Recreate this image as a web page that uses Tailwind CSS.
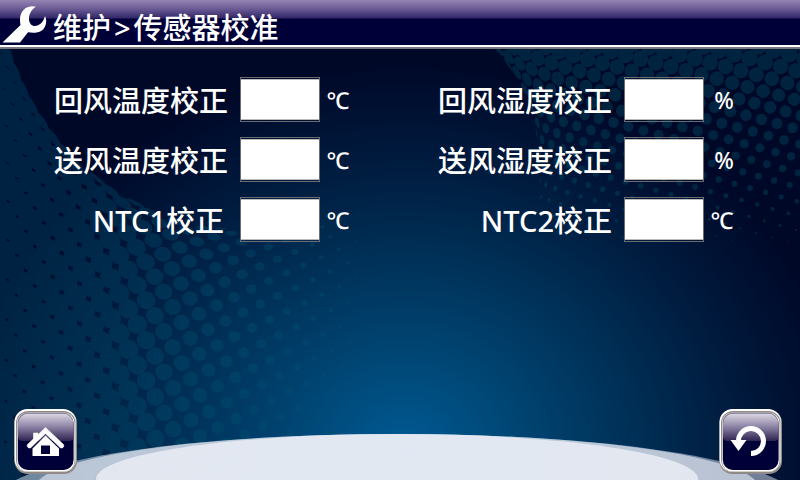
<!DOCTYPE html>
<html lang="zh-CN">
<head>
<meta charset="utf-8">
<meta name="viewport" content="width=device-width, initial-scale=1">
<title>维护&gt;传感器校准</title>
<script src="https://cdn.jsdelivr.net/npm/@tailwindcss/browser@4"></script>
</head>
<body class="relative isolate flex min-h-screen flex-col overflow-hidden bg-[#000828] font-['Noto_Sans','Noto_Sans_CJK_SC',sans-serif] font-medium text-white">

<!-- Backdrop: glow, halftone dots and the pale horizon -->
<svg class="absolute inset-0 -z-10 h-full w-full" viewBox="0 0 800 480" preserveAspectRatio="none" aria-hidden="true">
  <defs>
    <radialGradient id="glow" gradientUnits="userSpaceOnUse" cx="0" cy="0" r="1" gradientTransform="translate(405 450) scale(440 385)">
      <stop offset="0" stop-color="#005a94"/>
      <stop offset="0.25" stop-color="#004674"/>
      <stop offset="0.5" stop-color="#003158"/>
      <stop offset="0.75" stop-color="#001b3e"/>
      <stop offset="1" stop-color="#000828"/>
    </radialGradient>
  </defs>
  <rect width="800" height="480" fill="url(#glow)"/>
  <g id="dots-left" fill="#005272" opacity="0.36"></g>
  <g id="dots-right" fill="#005068" opacity="0.38"></g>
  <ellipse cx="397" cy="500" rx="400" ry="66" fill="#dfe6f5" fill-opacity="0.5"/>
  <ellipse cx="397" cy="488" rx="362" ry="54" fill="#e8ecf5" fill-opacity="0.62"/>
  <ellipse cx="397" cy="479" rx="301" ry="45" fill="#eceff6" fill-opacity="0.8"/>
</svg>

<header class="flex h-[49px] items-center gap-1.5 border-b-2 border-[#77777c] bg-[linear-gradient(to_bottom,#9484b4_0,#6a5a94_9px,#332768_18px,#000038_19px,#000038_45px,#fff_45px)]">
  <svg class="ml-0.5 h-[38px] w-[45px]" viewBox="0 0 45 38" fill="#fff" aria-hidden="true">
    <path d="M0.5 37.5 L18.5 20 C17.2 13 18.3 7.5 22.5 4 C26 1 30.5 0.5 34 1.8 C29.5 4.5 27.3 8.5 27 13 C26.8 16.5 28 19.5 31 20.8 C36.5 22 41.5 17.5 43 11 C45.5 16 44 22.5 39.5 25.8 C35.5 28.3 30 28 26 27.3 L18 37.5 Z"/>
  </svg>
  <h1 class="flex gap-[3px] pt-2 text-[29px] leading-10 whitespace-nowrap"><span>维护</span><span>&gt;</span><span>传感器校准</span></h1>
</header>

<main class="grid grid-cols-[48%_52%] gap-y-[13px] pt-7 text-[29px] leading-[47px] whitespace-nowrap">
  <div class="flex">
    <label for="return-temp" class="w-60 pr-3 text-right">回风温度校正</label>
    <input id="return-temp" type="text" class="h-[45px] w-20 border border-[#6c6c70] bg-[linear-gradient(#bbb_1px,#fff_1px,#fff_calc(100%-1px),#bbb_calc(100%-1px))] bg-origin-content bg-clip-content py-px text-center text-2xl text-[#000038]">
    <span class="w-9 text-center text-[23px]">℃</span>
  </div>
  <div class="flex">
    <label for="return-hum" class="w-60 pr-3 text-right">回风湿度校正</label>
    <input id="return-hum" type="text" class="h-[45px] w-20 border border-[#6c6c70] bg-[linear-gradient(#bbb_1px,#fff_1px,#fff_calc(100%-1px),#bbb_calc(100%-1px))] bg-origin-content bg-clip-content py-px text-center text-2xl text-[#000038]">
    <span class="w-10 text-center text-[23px]">%</span>
  </div>
  <div class="flex">
    <label for="supply-temp" class="w-60 pr-3 text-right">送风温度校正</label>
    <input id="supply-temp" type="text" class="h-[45px] w-20 border border-[#6c6c70] bg-[linear-gradient(#bbb_1px,#fff_1px,#fff_calc(100%-1px),#bbb_calc(100%-1px))] bg-origin-content bg-clip-content py-px text-center text-2xl text-[#000038]">
    <span class="w-9 text-center text-[23px]">℃</span>
  </div>
  <div class="flex">
    <label for="supply-hum" class="w-60 pr-3 text-right">送风湿度校正</label>
    <input id="supply-hum" type="text" class="h-[45px] w-20 border border-[#6c6c70] bg-[linear-gradient(#bbb_1px,#fff_1px,#fff_calc(100%-1px),#bbb_calc(100%-1px))] bg-origin-content bg-clip-content py-px text-center text-2xl text-[#000038]">
    <span class="w-10 text-center text-[23px]">%</span>
  </div>
  <div class="flex">
    <label for="ntc1" class="w-60 pr-4 text-right">NTC1校正</label>
    <input id="ntc1" type="text" class="h-[45px] w-20 border border-[#6c6c70] bg-[linear-gradient(#bbb_1px,#fff_1px,#fff_calc(100%-1px),#bbb_calc(100%-1px))] bg-origin-content bg-clip-content py-px text-center text-2xl text-[#000038]">
    <span class="w-9 text-center text-[23px]">℃</span>
  </div>
  <div class="flex">
    <label for="ntc2" class="w-60 pr-3 text-right">NTC2校正</label>
    <input id="ntc2" type="text" class="h-[45px] w-20 border border-[#6c6c70] bg-[linear-gradient(#bbb_1px,#fff_1px,#fff_calc(100%-1px),#bbb_calc(100%-1px))] bg-origin-content bg-clip-content py-px text-center text-2xl text-[#000038]">
    <span class="w-9 text-center text-[23px]">℃</span>
  </div>
</main>

<footer class="mt-auto flex justify-between pr-[18px] pb-1.5 pl-3.5">
  <button type="button" aria-label="主页">
    <svg class="block h-[65px] w-[63px]" viewBox="0 0 63 65" aria-hidden="true">
      <defs>
        <linearGradient id="rim" x1="0" y1="0" x2="0" y2="1">
          <stop offset="0" stop-color="#8d888c"/><stop offset="1" stop-color="#a09a9c"/>
        </linearGradient>
        <linearGradient id="gloss" x1="0" y1="0" x2="0" y2="1">
          <stop offset="0" stop-color="#dcd8e4"/><stop offset="0.5" stop-color="#8a80a2"/><stop offset="1" stop-color="#2e2250"/>
        </linearGradient>
      </defs>
      <rect x="0.5" y="0.5" width="62.5" height="64.5" rx="13" fill="#8f898a"/>
      <rect x="0.5" y="0" width="61.5" height="63" rx="13" fill="#fff"/>
      <rect x="2" y="2" width="59.5" height="61" rx="12" fill="url(#rim)"/>
      <rect x="3" y="3.5" width="57.5" height="59" rx="10.5" fill="#fff"/>
      <rect x="3.5" y="3.5" width="56" height="57.5" rx="10.5" fill="#8d8790"/>
      <rect x="4" y="4.5" width="55.5" height="56.5" rx="10" fill="#000038"/>
      <path d="M4 28V14.5A10 10 0 0 1 14 4.5H49.5A10 10 0 0 1 59.5 14.5V28Q59.5 32 55 32H8.5Q4 32 4 28Z" fill="url(#gloss)"/>
      <path d="M19.5 24H24V27L19.5 31Z M31.5 18.5L49.5 35.5Q50.5 37 49 38.5Q47.5 39.5 46 38.5L31.5 24.5L17 38.5Q15.5 39.5 14 38.5Q12.5 37 13.5 35.5Z" fill="#fff" stroke="#fff" stroke-width="0.6"/>
      <path fill-rule="evenodd" d="M31.5 26.5L45 39.5V47H18.5V39.5ZM27 36.5V45H36V36.5Z" fill="#fff"/>
    </svg>
  </button>
  <button type="button" aria-label="返回">
    <svg class="block h-[65px] w-[63px]" viewBox="0 0 63 65" aria-hidden="true">
      <rect x="0.5" y="0.5" width="62.5" height="64.5" rx="13" fill="#8f898a"/>
      <rect x="0.5" y="0" width="61.5" height="63" rx="13" fill="#fff"/>
      <rect x="2" y="2" width="59.5" height="61" rx="12" fill="url(#rim)"/>
      <rect x="3" y="3.5" width="57.5" height="59" rx="10.5" fill="#fff"/>
      <rect x="3.5" y="3.5" width="56" height="57.5" rx="10.5" fill="#8d8790"/>
      <rect x="4" y="4.5" width="55.5" height="56.5" rx="10" fill="#000038"/>
      <path d="M4 28V14.5A10 10 0 0 1 14 4.5H49.5A10 10 0 0 1 59.5 14.5V28Q59.5 32 55 32H8.5Q4 32 4 28Z" fill="url(#gloss)"/>
      <path d="M19.5 33A12.5 12.5 0 1 1 32 44.5" fill="none" stroke="#fff" stroke-width="5"/>
      <path d="M11.5 31H27.5L19.5 42Z" fill="#fff"/>
    </svg>
  </button>
</footer>

<script>
// Halftone field: a slanted lattice that flattens against a circular edge.
function halftone(id, o) {
  const flatten = s => Math.sqrt(s * s + o.k * o.k) - o.k;
  const unflatten = s => Math.sqrt((s + o.k) * (s + o.k) - o.k * o.k);
  const ax = o.anchor[0] - o.cx, ay = o.anchor[1] - o.cy, ad = Math.hypot(ax, ay);
  const af = (o.R + unflatten(ad - o.R)) / ad;
  const x0 = ax * af, y0 = ay * af;
  let out = '';
  for (let i = -50; i <= 50; i++) for (let j = -50; j <= 50; j++) {
    const x = x0 + i * o.u[0] + j * o.v[0], y = y0 + i * o.u[1] + j * o.v[1];
    const d = Math.hypot(x, y), s = d - o.R;
    if (s < 4) continue;
    const nd = o.R + flatten(s), px = o.cx + x / d * nd, py = o.cy + y / d * nd;
    if (px < o.minX || px > 815 || py < 30 || py > 495) continue;
    const r = o.radius(px, py);
    if (r < 0.3) continue;
    const squeeze = Math.max(0.12, s / Math.hypot(s, o.k));
    const a = Math.atan2(y, x) * 180 / Math.PI;
    out += `<ellipse rx="${(r * squeeze).toFixed(2)}" ry="${r.toFixed(2)}" transform="translate(${px.toFixed(1)} ${py.toFixed(1)}) rotate(${a.toFixed(1)})"/>`;
  }
  document.getElementById(id).innerHTML = out;
}
halftone('dots-left', {
  cx: 250, cy: -20, R: 250, k: 46, minX: -15, anchor: [155, 356], u: [19.4, -9], v: [10.1, 16.6],
  radius: (x, y) => x > 400 ? 0 : x > 100 ? 11.2 - (x - 100) * 0.039 : 11.2 + (100 - x) * 0.015
});
halftone('dots-right', {
  cx: 350, cy: 170, R: 190, k: 40, minX: 490, anchor: [739, 99], u: [15.8, 4.7], v: [-8.6, 13.1],
  radius: (x, y) => Math.min(9.5, 7.5 - (y - 75) * 0.041)
});
</script>
</body>
</html>
